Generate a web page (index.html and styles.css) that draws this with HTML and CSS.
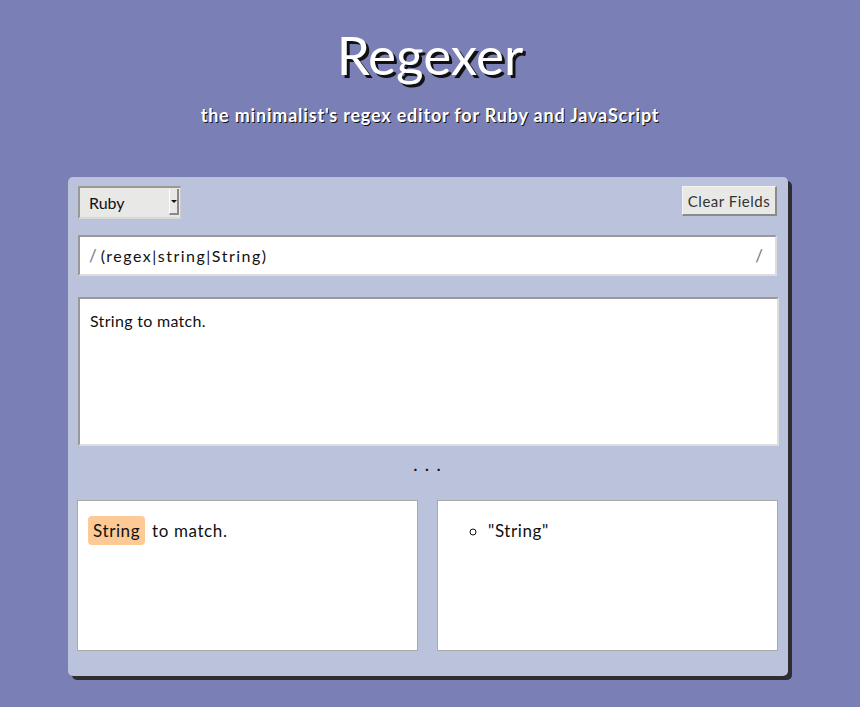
FILE: index.html
```html
<!DOCTYPE html>
<html lang="en">
<head>
<meta charset="utf-8">
<title>Regexer</title>
<link rel="stylesheet" href="styles.css">
</head>
<body>
<header class="header">
  <h1 class="title">Regexer</h1>
  <p class="subtitle">the minimalist's regex editor for Ruby and JavaScript</p>
</header>
<main class="panel">
  <div class="toolbar">
    <div class="select-wrap">
      <select class="lang">
        <option>Ruby</option>
        <option>JavaScript</option>
      </select>
      <span class="select-arrow"></span>
    </div>
    <button class="clear">Clear Fields</button>
  </div>
  <div class="regex">
    <span class="slash">/</span>
    <input class="regex-input" type="text" value="(regex|string|String)">
    <span class="slash">/</span>
  </div>
  <textarea class="subject">String to match.</textarea>
  <div class="dots">. . .</div>
  <div class="results">
    <div class="box match-box"><span class="hl">String</span> to match.</div>
    <div class="box groups-box">
      <ul class="groups"><li>"String"</li></ul>
    </div>
  </div>
</main>
</body>
</html>
```
FILE: styles.css
```css
html, body {
  margin: 0;
  padding: 0;
}
body {
  background: #7a80b5;
  font-family: "Lato", "Open Sans", sans-serif;
  color: #111;
  height: 707px;
  overflow: hidden;
}
.header {
  text-align: center;
  color: #fff;
  padding-top: 26px;
}
.title {
  margin: 0;
  font-size: 53px;
  font-weight: 400;
  line-height: 58px;
  text-shadow: 3px 3px 0 #111;
}
.subtitle {
  margin: 20px 0 0;
  font-size: 18px;
  font-weight: 700;
  letter-spacing: 0.8px;
  line-height: 22px;
  text-shadow: 1px 1px 0 #111;
}
.panel {
  width: 700px;
  margin: 51px 0 0 68px;
  padding: 9px 10px 25px;
  background: #bbc3dc;
  border-radius: 5px;
  box-shadow: 4px 4px 0 #2e2e32;
}
.toolbar {
  display: flex;
  justify-content: space-between;
  align-items: flex-start;
}
.select-wrap {
  position: relative;
  width: 103px;
  height: 33px;
}
.lang {
  appearance: none;
  -webkit-appearance: none;
  width: 103px;
  height: 33px;
  box-sizing: border-box;
  background: #e8e8e6;
  border-style: solid;
  border-width: 2px 1px 2px 2px;
  border-color: #999 #ccc #d8d8d8 #999;
  border-radius: 0;
  padding: 0 0 0 9px;
  font-family: "Lato", "Open Sans", sans-serif;
  font-size: 16px;
  color: #111;
  outline: none;
}
.select-arrow {
  position: absolute;
  right: 2px;
  top: 3px;
  width: 10px;
  height: 26px;
  border-left: 1px solid #fff;
  border-right: 2px solid #888;
  border-bottom: 2px solid #888;
  box-sizing: border-box;
  pointer-events: none;
}
.select-arrow::after {
  content: "";
  position: absolute;
  left: 1px;
  top: 11px;
  border-left: 3px solid transparent;
  border-right: 3px solid transparent;
  border-top: 3px solid #111;
}
.clear {
  width: 95px;
  height: 30px;
  background: #e8e8e6;
  border-style: solid;
  border-width: 1px 2px 2px 1px;
  border-color: #f4f4f4 #8a8a8a #8a8a8a #f4f4f4;
  font-family: "Lato", "Open Sans", sans-serif;
  font-size: 15px;
  letter-spacing: 0.5px;
  color: #333;
  padding: 0;
  margin-right: 1px;
}
.regex {
  display: flex;
  align-items: center;
  width: 699px;
  height: 41px;
  box-sizing: border-box;
  margin-top: 16px;
  background: #fff;
  border-style: solid;
  border-width: 2px;
  border-color: #999 #ddd #ddd #999;
  padding: 0 12px 0 9px;
}
.slash {
  color: #6f7690;
  font-size: 17px;
}
.regex-input {
  flex: 1;
  border: none;
  outline: none;
  background: transparent;
  font-family: "Lato", "Open Sans", sans-serif;
  font-size: 16px;
  letter-spacing: 1.5px;
  color: #111;
  padding: 0 0 0 4px;
}
.subject {
  display: block;
  width: 701px;
  height: 149px;
  box-sizing: border-box;
  margin-top: 21px;
  resize: none;
  border-style: solid;
  border-width: 2px;
  border-color: #999 #ddd #ddd #999;
  padding: 12px 10px;
  font-family: "Lato", "Open Sans", sans-serif;
  font-size: 16px;
  letter-spacing: 0.3px;
  color: #111;
  outline: none;
}
.dots {
  text-align: center;
  font-size: 16px;
  font-weight: 700;
  letter-spacing: 2px;
  line-height: 20px;
  height: 20px;
  margin-top: 9px;
  color: #111;
}
.results {
  display: grid;
  grid-template-columns: 341px 341px;
  column-gap: 19px;
  margin: 25px 0 0 -1px;
}
.box {
  height: 151px;
  box-sizing: border-box;
  background: #fff;
  border: 1px solid #a8a8a8;
  padding: 15px 10px;
  font-size: 17px;
  letter-spacing: 0.6px;
  line-height: 29px;
}
.hl {
  display: inline-block;
  background: #fdc995;
  border-radius: 4px;
  padding: 0 5px;
  margin-right: 2px;
  line-height: 29px;
}
.groups {
  margin: 0;
  padding-left: 40px;
  list-style: circle;
}
```
